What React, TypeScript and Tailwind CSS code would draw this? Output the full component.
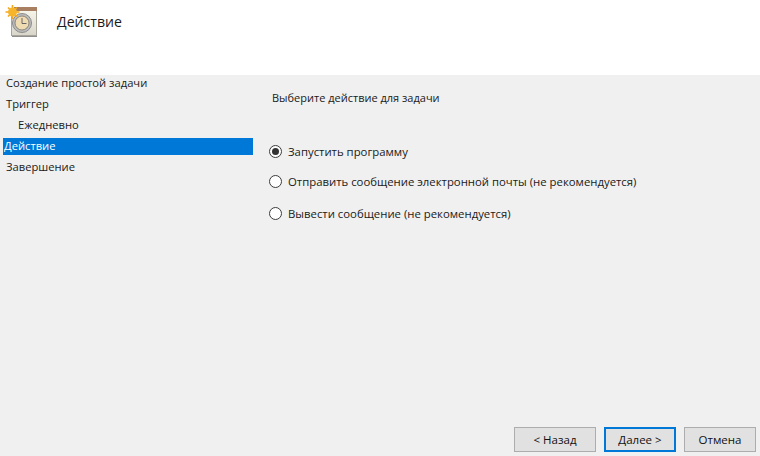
const font = { fontFamily: '"Open Sans", "Noto Sans", sans-serif' };

function Icon() {
  return (
    <svg width="40" height="40" viewBox="0 0 40 40" className="shrink-0">
      <defs>
        <linearGradient id="pg" x1="0" y1="0" x2="0" y2="1">
          <stop offset="0" stopColor="#f8f5ea" />
          <stop offset="1" stopColor="#d8d5cb" />
        </linearGradient>
      </defs>
      <rect x="12" y="36" width="25" height="1" fill="#8f8f8f" />
      <rect x="11.5" y="9.5" width="25" height="26" fill="url(#pg)" stroke="#aaa59b" strokeWidth="1" />
      <rect x="14" y="7" width="23" height="4" fill="#a87f60" />
      <circle cx="22" cy="23" r="9.5" fill="#bcbcbc" stroke="#8b8b8b" />
      <circle cx="22" cy="23" r="7" fill="#f0dcb2" stroke="#77736c" strokeWidth="0.8" />
      <path d="M22 18V23.5H26.5" fill="none" stroke="#666666" strokeWidth="1" />
      <g stroke="#f3a71b" strokeWidth="1.6">
        <path d="M12.5 5V19M5.5 12H19.5M8 7.5L17 16.5M17 7.5L8 16.5" />
      </g>
      <circle cx="12.5" cy="12" r="4.5" fill="#f7b52c" />
    </svg>
  );
}

function Radio({ checked }: { checked?: boolean }) {
  return (
    <span className="flex h-[13px] w-[13px] shrink-0 items-center justify-center rounded-full border border-[#3c3c3c] bg-white">
      {checked && <span className="h-[7px] w-[7px] rounded-full bg-[#333333]" />}
    </span>
  );
}

function Step({ label, active, indent }: { label: string; active?: boolean; indent?: boolean }) {
  return (
    <div
      className={
        "flex h-[17px] items-center pb-[2px] mt-[4px] first:mt-0 " +
        (active ? "bg-[#0078d7] text-white pl-[1px]" : "pl-[3px] text-[#1a1a1a]")
      }
    >
      <span className={indent ? "pl-[12px]" : ""}>{label}</span>
    </div>
  );
}

function Option({ label, checked, extra }: { label: string; checked?: boolean; extra?: string }) {
  return (
    <label className={"flex h-[17px] items-center gap-[6px] pl-[16px] text-[11.35px] text-[#1a1a1a] " + (extra ?? "")}>
      <Radio checked={checked} />
      <span>{label}</span>
    </label>
  );
}

function Btn({ label, primary, w }: { label: string; primary?: boolean; w: string }) {
  return (
    <button
      className={
        "h-[25px] bg-[#e1e1e1] text-[11.5px] text-[#111111] " +
        w +
        (primary ? " border-2 border-[#0078d7]" : " border border-[#adadad]")
      }
    >
      {label}
    </button>
  );
}

export default function App() {
  return (
    <div style={font} className="flex h-[456px] w-[760px] flex-col overflow-hidden bg-[#f0f0f0] text-[11px] leading-[17px]">
      <header className="flex h-[75px] shrink-0 items-start gap-[17px] bg-white">
        <Icon />
        <h1 className="mt-[12px] text-[14.1px] leading-[20px] text-[#1a1a1a]">Действие</h1>
      </header>
      <div className="flex min-h-0 flex-1">
        <nav className="w-[253px] shrink-0 pl-[3px] text-[11.2px]">
          <Step label="Создание простой задачи" />
          <Step label="Триггер" />
          <Step label="Ежедневно" indent />
          <Step label="Действие" active />
          <Step label="Завершение" />
        </nav>
        <main className="flex flex-1 flex-col">
          <p className="mt-[14px] pl-[19px] text-[#1a1a1a]">Выберите действие для задачи</p>
          <div className="mt-[37px] flex flex-col">
            <Option label="Запустить программу" checked />
            <Option label="Отправить сообщение электронной почты (не рекомендуется)" extra="mt-[13px]" />
            <Option label="Вывести сообщение (не рекомендуется)" extra="mt-[15px]" />
          </div>
        </main>
      </div>
      <footer className="flex shrink-0 justify-end gap-[8px] pb-[4px] pr-[4px]">
        <Btn label="< Назад" w="w-[82px]" />
        <Btn label="Далее >" primary w="w-[72px]" />
        <Btn label="Отмена" w="w-[72px]" />
      </footer>
    </div>
  );
}
